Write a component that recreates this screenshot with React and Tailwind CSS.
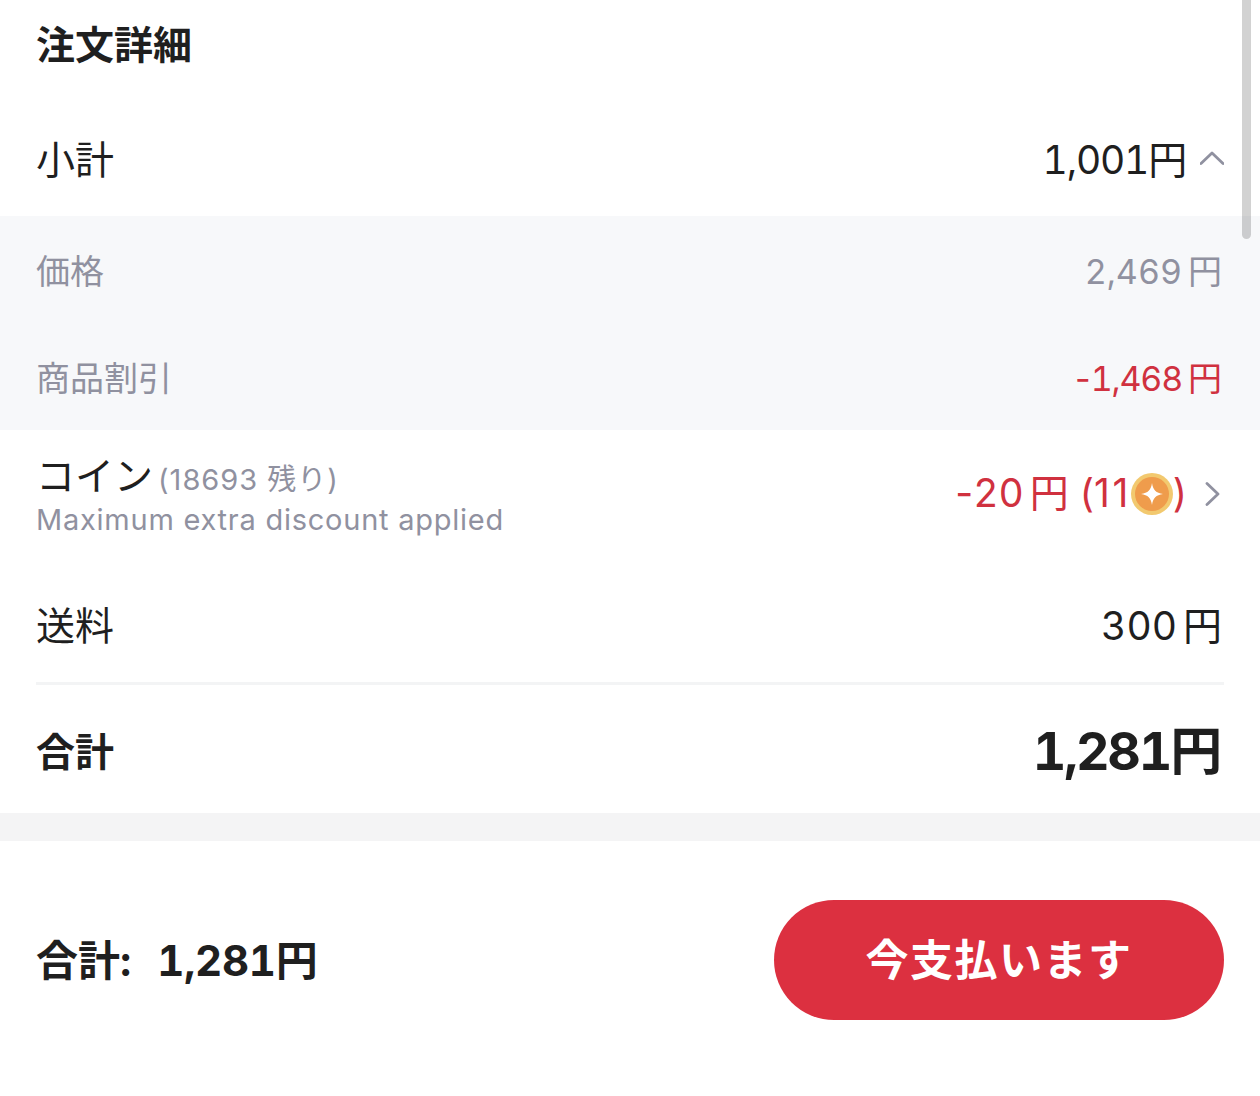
const font = { fontFamily: '"Inter","Noto Sans CJK JP",sans-serif' };

function Chevron({ up, className }) {
  return (
    <svg viewBox="0 0 24 24" className={className} fill="none" stroke="#9091a0" strokeWidth="2.8" strokeLinecap="round" strokeLinejoin="round">
      {up ? <path d="M1 16.5 L12 6 L23 16.5" /> : <path d="M7 1.5 L18 12 L7 22.5" />}
    </svg>
  );
}

function Coin() {
  return (
    <svg viewBox="0 0 42 42" className="w-[42px] h-[42px] shrink-0">
      <circle cx="21" cy="21" r="21" fill="#f2c96f" />
      <circle cx="21" cy="21" r="17" fill="#ef9c4c" />
      <path d="M21 10 C22 17 25 20 32 21 C25 22 22 25 21 32 C20 25 17 22 10 21 C17 20 20 17 21 10Z" fill="#fff" />
    </svg>
  );
}

function Sub({ label, num, minus, red }) {
  return (
    <div className="h-[107px] pt-[3px] flex items-center justify-between text-[34px] text-[#9091a0]">
      <span>{label}</span>
      <span className={red ? "text-[#d0313f]" : ""}>
        {minus && <span>-</span>}
        <span className={red ? "tabular-nums tracking-[-1.2px]" : "tabular-nums"}>{num}</span>
        <span className="ml-[6px] mr-[2px]">円</span>
      </span>
    </div>
  );
}

export default function App() {
  return (
    <div style={font} className="relative w-[1260px] h-[1096px] bg-white overflow-hidden text-[#1f1f1f]">
      <div className="absolute left-[1242px] top-0 w-[9px] h-[239px] rounded-b-full bg-[#1f1f1f]/20" />
      <div className="h-[106px] pl-[36px] pt-[20px] text-[39px] leading-[50px] font-bold">注文詳細</div>

      <div className="h-[110px] px-[36px] flex items-center justify-between text-[39px] pb-[2px]">
        <span>小計</span>
        <span className="flex items-center gap-[14px]">
          <span className="tabular-nums tracking-[-1.2px]">1,001円</span>
          <Chevron up className="w-[24px] h-[24px] -mt-[3px]" />
        </span>
      </div>

      <div className="bg-[#f7f8fa] px-[36px]">
        <Sub label="価格" num="2,469" />
        <Sub label="商品割引" num="1,468" minus red />
      </div>

      <div className="h-[127px] px-[36px] pt-[5px] flex items-center justify-between">
        <div className="flex flex-col">
          <div className="flex items-baseline gap-[5px] h-[48px]">
            <span className="text-[39px] leading-[48px]">コイン</span>
            <span className="text-[29px] text-[#9091a0] tracking-[1px]">(18693 残り)</span>
          </div>
          <span className="text-[29px] leading-[40px] text-[#9091a0] tracking-[0.75px]">Maximum extra discount applied</span>
        </div>
        <div className="flex items-center gap-[13px] -mt-[5px]">
          <span className="flex items-center text-[39px] text-[#d0313f]">
            <span>-<span className="tabular-nums">20</span><span className="ml-[6px] mr-[11px]">円</span>(<span className="tracking-[2.5px]">11</span></span>
            <Coin />
            <span>)</span>
          </span>
          <Chevron className="w-[24px] h-[24px]" />
        </div>
      </div>

      <div className="h-[128px] mx-[36px] border-b-[3px] border-[#f3f4f5] flex items-center justify-between text-[39px] pt-[13px]">
        <span>送料</span>
        <span className="tabular-nums mr-[2px]">300<span className="ml-[6px]">円</span></span>
      </div>

      <div className="h-[128px] px-[36px] pt-[6px] flex items-center justify-between">
        <span className="text-[39px] font-bold">合計</span>
        <span className="text-[52px] font-bold tabular-nums tracking-[-2.2px] mr-[4px]">1,281円</span>
      </div>

      <div className="h-[28px] bg-[#f4f4f5]" />

      <div className="h-[238px] px-[36px] flex items-center justify-between">
        <span className="text-[42px] font-bold flex items-center tabular-nums">
          <span>合計:</span>
          <span className="ml-[26px] tracking-[-0.3px]">1,281円</span>
        </span>
        <button className="w-[450px] h-[120px] rounded-[60px] bg-[#dc3040] text-white text-[43px] font-semibold tracking-[1.5px]">今支払います</button>
      </div>
    </div>
  );
}
